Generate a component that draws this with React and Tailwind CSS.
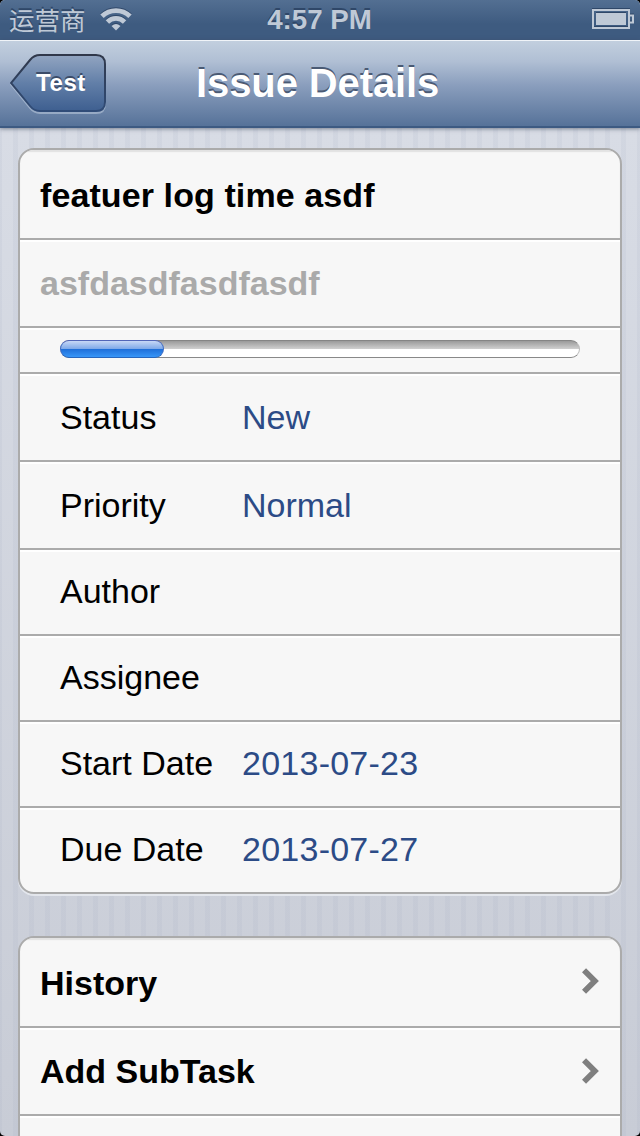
const Row = ({ h, children, first, last }) => (
  <div className={`${h} shrink-0 flex items-center ${last ? "" : "border-b-2 border-[#ababab]"} ${first ? "shadow-[inset_0_2px_1px_#e2e2e2]" : "shadow-[inset_0_2px_0_#ffffff]"}`}>
    {children}
  </div>
);

const Field = ({ h, label, value, last, up = "mb-0" }) => (
  <Row h={h} last={last}>
    <span className={`w-[182px] ml-10 ${up} text-[34px] leading-10 whitespace-nowrap`}>{label}</span>
    <span className={`${up} text-[34px] leading-10 text-[#2c4b86] whitespace-nowrap ${/^\d/.test(value) ? "tracking-[0.25px]" : ""}`}>{value}</span>
  </Row>
);

const Chevron = ({ className = "" }) => (
  <svg className={`ml-auto mr-[21px] block ${className}`} width="17" height="26" viewBox="0 0 17 26">
    <path d="M2 2.2 L12.8 13 L2 23.8" fill="none" stroke="#7f7f7f" strokeWidth="5.8" />
  </svg>
);

const card = "mx-[18px] border-2 border-[#ababab] bg-[#f7f7f7] overflow-hidden flex flex-col shrink-0";

export default function App() {
  return (
    <div className="bg-black w-[640px] h-[1136px] font-['Liberation_Sans',Arial,sans-serif] text-black">
      <div className="w-full h-full rounded-[5px] overflow-hidden flex flex-col bg-[linear-gradient(to_bottom,#d8dce5_128px,#c8ccd6_1136px)]">
        <div className="h-10 shrink-0 grid grid-cols-3 items-center bg-[linear-gradient(#536f92,#3e5b80_60%,#3e5b80)] text-[#bfc9d6] [text-shadow:0_-2px_0_#2f4768]">
          <div className="flex items-center pl-[9px] gap-[15px]">
            <span className="mt-[-2px] text-[25.5px] leading-10 font-['Noto_Sans_CJK_SC',sans-serif]">运营商</span>
            <svg width="32" height="24" viewBox="0 0 32 24" className="mt-[-2px] -ml-px drop-shadow-[0_-1px_0_#2f4768]">
              <g fill="none" stroke="#bfc9d6" strokeWidth="4.8">
                <path d="M2 9.3 A20 20 0 0 1 30 9.3" />
                <path d="M7.4 15 A12.2 12.2 0 0 1 24.6 15" />
              </g>
              <path d="M11.5 19 Q16 14.8 20.5 19 L16 23.5Z" fill="#bfc9d6" />
            </svg>
          </div>
          <span className="text-center text-[27.7px] font-bold leading-10 whitespace-nowrap -ml-px">4:57 PM</span>
          <svg width="42" height="20" viewBox="0 0 42 20" className="justify-self-end mr-[6px] mt-[-2px] block drop-shadow-[0_-1px_0_#2f4768]">
            <rect x="1" y="1" width="36" height="18" fill="none" stroke="#bfc9d6" strokeWidth="2" />
            <path d="M4 4h30v12H4z" fill="#bfc9d6" />
            <path d="M38 6.5h3v7h-3" fill="none" stroke="#bfc9d6" strokeWidth="2" />
          </svg>
        </div>

        <div className="relative z-10 h-[88px] shrink-0 flex items-center border-t border-[#f0f4f8] border-b-2 border-b-[#3d5a82] bg-[linear-gradient(#c2cfde,#b0bfd4_24%,#8a9ebd_52%,#567299)] shadow-[0_1px_4px_rgba(60,70,90,0.6)]">
          <div className="relative w-[196px] shrink-0 pl-[10px]">
            <svg width="98" height="62" viewBox="0 0 98 62" className="block">
              <defs>
                <linearGradient id="back" x2="0" y2="1">
                  <stop offset="0" stopColor="#92a5c1" />
                  <stop offset=".5" stopColor="#627fa8" />
                  <stop offset="1" stopColor="#3e5f90" />
                </linearGradient>
                <linearGradient id="edge" x2="0" y2="1">
                  <stop offset="0" stopColor="#30384a" />
                  <stop offset="1" stopColor="#304c78" />
                </linearGradient>
              </defs>
              <path d="M30 3 H86 Q95 3 95 12 V51 Q95 60 86 60 H30 Q24 60 20 55 L1 31.5 L20 8 Q24 3 30 3Z" fill="none" stroke="#b8c6da" strokeOpacity=".6" strokeWidth="2" />
              <path d="M30 2 H86 Q95 2 95 11 V49 Q95 58 86 58 H30 Q24 58 20 53 L1 30 L20 7 Q24 2 30 2Z" fill="url(#back)" stroke="url(#edge)" strokeWidth="2" />
            </svg>
            <span className="absolute left-[36px] top-[15px] text-[24px] tracking-[0.6px] leading-[30px] font-bold text-white [text-shadow:0_-2px_0_#3b4c69]">Test</span>
          </div>
          <h1 className="mb-[2px] text-[40px] tracking-[-0.1px] leading-[44px] font-bold text-white whitespace-nowrap [text-shadow:0_-2px_0_#4a5a74]">Issue Details</h1>
        </div>

        <div className="grow min-h-0 overflow-hidden flex flex-col pt-5 bg-[repeating-linear-gradient(to_right,rgba(150,160,185,0.1)_0_2px,transparent_2px_13px,rgba(150,160,185,0.1)_13px_16px)]">
          <div className={`${card} rounded-[16px] shadow-[0_2px_0_#e3e6ec]`}>
            <Row h="h-[90px]" first>
              <span className="ml-5 mt-0.5 text-[34px] tracking-[0.1px] leading-10 font-bold whitespace-nowrap">featuer log time asdf</span>
            </Row>
            <Row h="h-[88px]">
              <span className="ml-5 text-[34px] leading-10 font-bold text-[#aaaaaa] whitespace-nowrap">asfdasdfasdfasdf</span>
            </Row>
            <Row h="h-[46px]">
              <div className="mx-10 mt-[-2px] h-[18px] grow grid">
                <div className="col-start-1 row-start-1 rounded-full border border-t-[#858585] border-x-[#bbbbbb] border-b-[#888888] bg-[linear-gradient(#9a9a9a,#d0d0d0_50%,#ffffff_50%)]" />
                <div className="col-start-1 row-start-1 w-[104px] rounded-full border border-t-[#5266b8] border-x-[#3f6cc4] border-b-[#2666bd] bg-[linear-gradient(#c7d8f6,#7da8e8_50%,#1e6ed8_50%,#3796f8)]" />
              </div>
            </Row>
            <Field h="h-[88px]" label="Status" value="New" />
            <Field h="h-[88px]" label="Priority" value="Normal" />
            <Field h="h-[86px]" label="Author" up="mb-0.5" />
            <Field h="h-[86px]" label="Assignee" up="mb-0.5" />
            <Field h="h-[86px]" label="Start Date" value="2013-07-23" up="mb-0.5" />
            <Field h="h-[84px]" label="Due Date" value="2013-07-27" up="mb-0.5" last />
          </div>
          <div className={`${card} mt-[42px] rounded-t-[16px]`}>
            <Row h="h-[90px]" first>
              <span className="ml-5 mt-0.5 text-[34px] leading-10 font-bold">History</span>
              <Chevron className="mb-0.5" />
            </Row>
            <Row h="h-[88px]">
              <span className="ml-5 text-[34px] leading-10 font-bold">Add SubTask</span>
              <Chevron />
            </Row>
            <Row h="h-[88px]" last />
          </div>
        </div>
      </div>
    </div>
  );
}
